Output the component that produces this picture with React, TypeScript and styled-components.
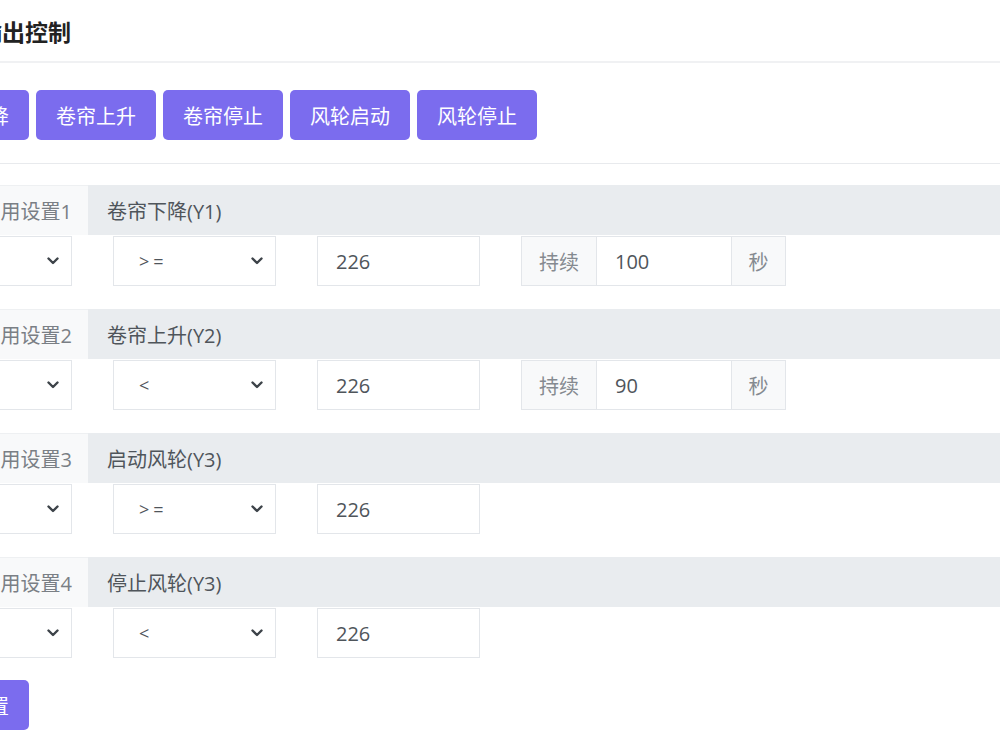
import React, { FC } from 'react';
import styled, { createGlobalStyle } from 'styled-components';

const GlobalStyle = createGlobalStyle`
  html, body {
    margin: 0;
    padding: 0;
    background: #fff;
    overflow: hidden;
  }
  body {
    font-family: "Open Sans", "Noto Sans CJK SC", sans-serif;
  }
`

type Rule = {
  label: string;
  title: string;
  op: string;
  value: string;
  hold?: string;
};

const rules: Rule[] = [
  { label: '启用设置1', title: '卷帘下降(Y1)', op: '>=', value: '226', hold: '100' },
  { label: '启用设置2', title: '卷帘上升(Y2)', op: '<', value: '226', hold: '90' },
  { label: '启用设置3', title: '启动风轮(Y3)', op: '>=', value: '226' },
  { label: '启用设置4', title: '停止风轮(Y3)', op: '<', value: '226' },
];

const actions = ['卷帘下降', '卷帘上升', '卷帘停止', '风轮启动', '风轮停止'];

const Chevron: FC = () => (
  <svg width="12" height="8" viewBox="0 0 12 8">
    <path d="M1.5 1.5 L6 6 L10.5 1.5" fill="none" stroke="#3d4349" strokeWidth="2.4" strokeLinecap="round" strokeLinejoin="round" />
  </svg>
);

const Select: FC<{ value?: string }> = ({ value }) => (
  <SelectBox>
    <span>{value}</span>
    <Chevron />
  </SelectBox>
);

export default function App() {
  return (
    <>
      <GlobalStyle />
      <Page>
        <CardHeader>
          <h2>输出控制</h2>
        </CardHeader>
        <Toolbar>
          {actions.map((a) => (
            <Button key={a}>{a}</Button>
          ))}
        </Toolbar>
        <Form>
          {rules.map((r) => (
            <Group key={r.label}>
              <GroupHead>
                <LabelCell>{r.label}</LabelCell>
                <TitleCell>{r.title}</TitleCell>
              </GroupHead>
              <Fields>
                <Select />
                <Select value={r.op} />
                <TextInput>{r.value}</TextInput>
                {r.hold && (
                  <InputGroup>
                    <Addon $w={76}>持续</Addon>
                    <GroupInput>{r.hold}</GroupInput>
                    <Addon $w={55}>秒</Addon>
                  </InputGroup>
                )}
              </Fields>
            </Group>
          ))}
          <Button>保存设置</Button>
        </Form>
      </Page>
    </>
  );
}

const Page = styled.div`
  margin-left: -91px;
  width: 1200px;
`
const CardHeader = styled.div`
  height: 61px;
  display: flex;
  align-items: center;
  padding-left: 70px;
  border-bottom: 2px solid #f0f1f3;
  h2 {
    margin: 0;
    font-size: 23px;
    font-weight: 700;
    color: #222;
  }
`
const Toolbar = styled.div`
  display: flex;
  gap: 7px;
  padding: 27px 0 23px;
  border-bottom: 1px solid #e8eaed;
`
const Button = styled.button`
  width: 120px;
  height: 50px;
  border: none;
  border-radius: 5px;
  background: #7b6cee;
  color: #fff;
  font-family: inherit;
  font-size: 20px;
  padding: 0;
  cursor: pointer;
`
const Form = styled.div`
  padding-top: 21px;
`
const Group = styled.div`
  margin-bottom: 23px;
  &:last-of-type {
    margin-bottom: 22px;
  }
`
const GroupHead = styled.div`
  display: flex;
  height: 50px;
  font-size: 20px;
`
const LabelCell = styled.div`
  width: 179px;
  box-sizing: border-box;
  display: flex;
  align-items: center;
  justify-content: flex-end;
  padding-right: 16px;
  background: #f8f9fa;
  color: #7a7f85;
  border-top: 1px solid #eef0f2;
`
const TitleCell = styled.div`
  flex: 1;
  display: flex;
  align-items: center;
  padding-left: 19px;
  background: #e9ecef;
  color: #4f555b;
`
const Fields = styled.div`
  display: flex;
  gap: 41px;
  margin-top: 1px;
  height: 50px;
`
const SelectBox = styled.div`
  width: 163px;
  box-sizing: border-box;
  border: 1px solid #e3e6ea;
  display: flex;
  align-items: center;
  justify-content: space-between;
  padding: 0 12px 0 25px;
  font-size: 18px;
  color: #4f555b;
  span {
    letter-spacing: 4px;
  }
`
const TextInput = styled.div`
  width: 163px;
  box-sizing: border-box;
  border: 1px solid #e3e6ea;
  display: flex;
  align-items: center;
  padding-left: 18px;
  font-size: 20px;
  color: #4f555b;
`
const InputGroup = styled.div`
  display: flex;
  height: 50px;
`
const Addon = styled.div<{ $w: number }>`
  width: ${(p) => p.$w}px;
  box-sizing: border-box;
  border: 1px solid #e3e6ea;
  background: #f8f9fa;
  color: #858a90;
  font-size: 20px;
  display: flex;
  align-items: center;
  justify-content: center;
`
const GroupInput = styled.div`
  width: 134px;
  box-sizing: border-box;
  border-top: 1px solid #e3e6ea;
  border-bottom: 1px solid #e3e6ea;
  display: flex;
  align-items: center;
  padding-left: 18px;
  font-size: 20px;
  color: #4f555b;
`
